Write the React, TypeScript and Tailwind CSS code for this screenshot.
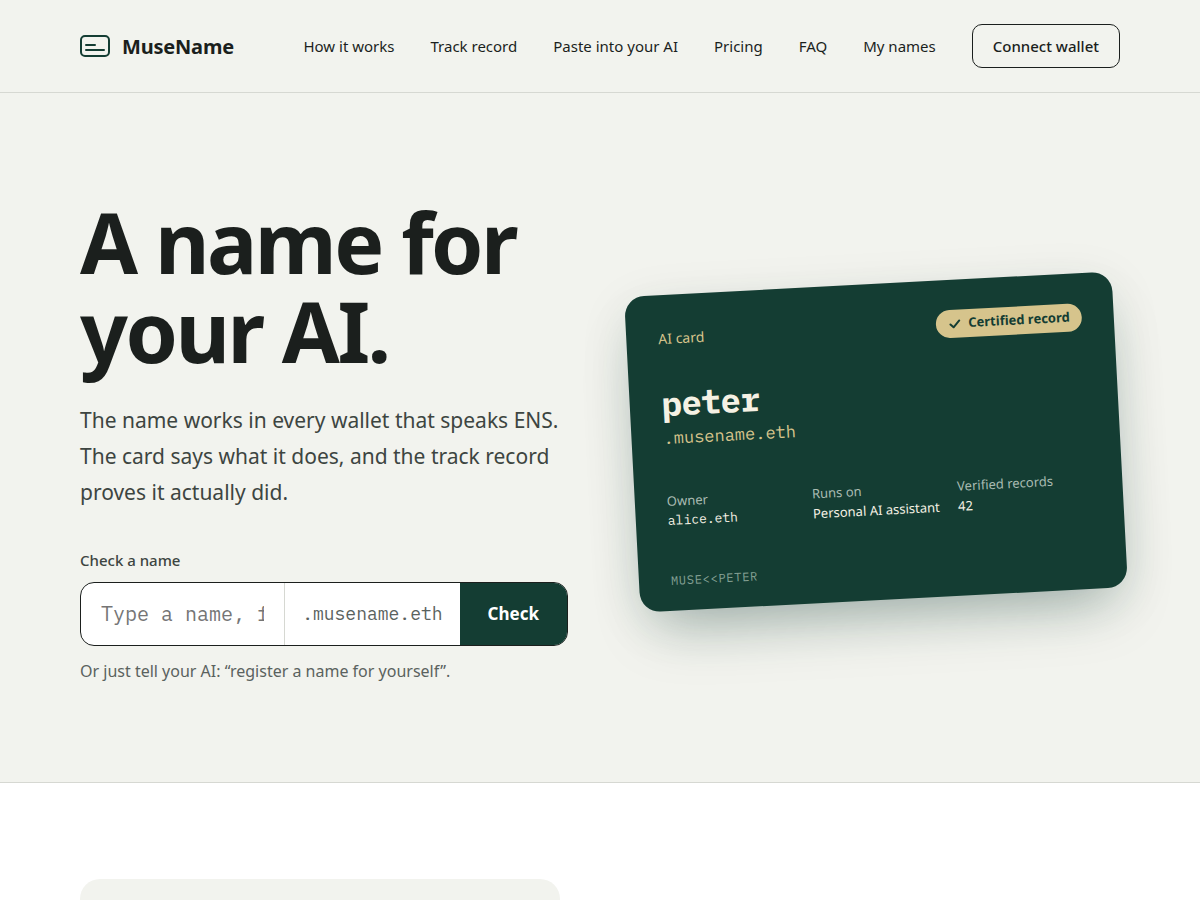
import React, { useState } from 'react';

const navLinks = [
  { label: 'How it works', href: '#how' },
  { label: 'Track record', href: '#record' },
  { label: 'Paste into your AI', href: '#paste' },
  { label: 'Pricing', href: '#pricing' },
  { label: 'FAQ', href: '#faq' },
  { label: 'My names', href: '#names' },
];

const LogoIcon: React.FC = () => (
  <svg width="30" height="22" viewBox="0 0 30 22" fill="none" stroke="#143d33" strokeWidth="2" aria-hidden="true">
    <rect x="1" y="1" width="28" height="20" rx="4" />
    <path d="M6 10h9M6 15h18" strokeLinecap="round" />
  </svg>
);

const CheckIcon: React.FC = () => (
  <svg width="14" height="14" viewBox="0 0 14 14" fill="none" stroke="currentColor" strokeWidth="2" aria-hidden="true">
    <path d="M2.5 7.5l3 3 6-6.5" strokeLinecap="round" strokeLinejoin="round" />
  </svg>
);

const Header: React.FC = () => (
  <header className="border-b border-[#d6d8d2]">
    <div className="mx-auto flex max-w-[1120px] items-center justify-between px-10 py-6">
      <a href="#top" className="flex items-center gap-3 text-xl leading-[29px] font-bold tracking-[-0.01em]">
        <LogoIcon />
        MuseName
      </a>
      <nav className="flex items-center gap-9 text-[15px]">
        {navLinks.map((link) => (
          <a key={link.href} href={link.href} className="whitespace-nowrap hover:underline">
            {link.label}
          </a>
        ))}
        <button
          type="button"
          className="h-11 rounded-[10px] border border-[#1b1f1d] px-5 font-medium whitespace-nowrap"
        >
          Connect wallet
        </button>
      </nav>
    </div>
  </header>
);

const NameForm: React.FC = () => {
  const [name, setName] = useState('');

  return (
    <form onSubmit={(e) => e.preventDefault()} className="mt-[37px]">
      <label htmlFor="name" className="block text-[15px] leading-[26px] font-medium text-[#3d4541]">
        Check a name
      </label>
      <div className="mt-[9px] flex h-16 overflow-hidden rounded-[14px] border border-[#1b1f1d] bg-white">
        <input
          id="name"
          type="text"
          value={name}
          onChange={(e) => setName(e.target.value)}
          placeholder="Type a name, for example peter"
          className="min-w-0 flex-1 px-5 font-['IBM_Plex_Mono','Liberation_Mono',monospace] text-xl outline-none placeholder:text-[#757575]"
        />
        <span className="flex items-center border-l border-[#d6d8d2] px-[17px] font-['IBM_Plex_Mono','Liberation_Mono',monospace] text-lg text-[#5a625e]">
          .musename.eth
        </span>
        <button type="submit" className="bg-[#143d33] px-7 text-[17px] font-bold text-white">
          Check
        </button>
      </div>
      <p className="mt-2.5 leading-[30px] text-[#5a625e]">Or just tell your AI: “register a name for yourself”.</p>
    </form>
  );
};

const AiCard: React.FC = () => (
  <article className="-rotate-3 rounded-[20px] bg-[#143d33] px-8 pt-[30px] pb-5 text-[#f5f1e4] shadow-[0_30px_60px_-20px_rgba(20,61,51,0.35),0_12px_50px_rgba(20,61,51,0.1)]">
    <div className="flex h-7 items-center justify-between">
      <span className="text-sm leading-6 text-[#d6c48c]">AI card</span>
      <span className="flex h-7 items-center gap-1.5 rounded-full bg-[#d6c48c] px-3 text-[13px] font-bold text-[#143d33]">
        <CheckIcon />
        Certified record
      </span>
    </div>
    <p className="mt-[30px] font-['IBM_Plex_Mono','Liberation_Mono',monospace] text-[34px] leading-10 font-bold tracking-tight">
      peter
    </p>
    <p className="mt-[3px] font-['IBM_Plex_Mono','Liberation_Mono',monospace] text-[17px] leading-6 text-[#d6c48c]">
      .musename.eth
    </p>
    <dl className="mt-[41px] grid grid-cols-3 gap-3 text-[13px] leading-5">
      <div>
        <dt className="text-[#a9bbb2]">Owner</dt>
        <dd className="font-['IBM_Plex_Mono','Liberation_Mono',monospace]">alice.eth</dd>
      </div>
      <div>
        <dt className="text-[#a9bbb2]">Runs on</dt>
        <dd className="whitespace-nowrap">Personal AI assistant</dd>
      </div>
      <div>
        <dt className="text-[#a9bbb2]">Verified records</dt>
        <dd>42</dd>
      </div>
    </dl>
    <p className="mt-10 font-['IBM_Plex_Mono','Liberation_Mono',monospace] text-xs leading-5 tracking-[0.06em] text-[#84a093]">
      MUSE&lt;&lt;PETER
    </p>
  </article>
);

const App: React.FC = () => {
  return (
    <div id="top" className="min-h-screen bg-[#f2f3ee] font-['Noto_Sans',sans-serif] text-[#1b1f1d]">
      <Header />
      <main>
        <section className="border-b border-[#d6d8d2]">
          <div className="mx-auto grid max-w-[1120px] grid-cols-2 items-center gap-16 px-10 pt-[104px] pb-24">
            <div>
              <h1 className="text-[84px] leading-[89px] font-bold tracking-[-0.03em]">
                A name for
                <br />
                your AI.
              </h1>
              <p className="mt-[27px] text-[21px] leading-9 text-[#3d4541]">
                The name works in every wallet that speaks ENS. The card says what it does, and the track record proves
                it actually did.
              </p>
              <NameForm />
            </div>
            <AiCard />
          </div>
        </section>
        <section id="how" className="bg-white">
          <div className="mx-auto grid max-w-[1120px] grid-cols-2 gap-20 px-10 py-24">
            <div className="h-80 rounded-[20px] bg-[#f2f3ee]" />
          </div>
        </section>
      </main>
    </div>
  );
};

export default App;
